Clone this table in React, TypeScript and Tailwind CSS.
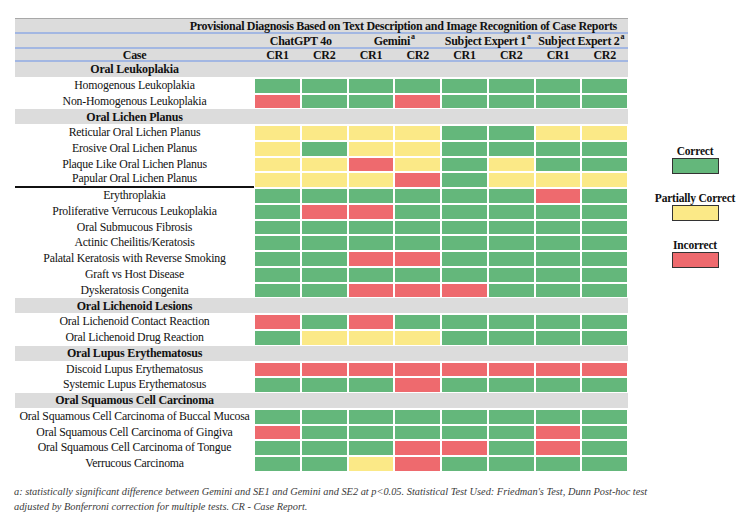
import React from "react";

type C = "G" | "Y" | "R";

const fill: Record<C, string> = {
  G: "bg-[#64b77b]",
  Y: "bg-[#fbe987]",
  R: "bg-[#ee6a6e]",
};

type Row =
  | { kind: "section"; label: string }
  | { kind: "data"; label: string; cells: string; rule?: boolean };

const rows: Row[] = [
  { kind: "section", label: "Oral Leukoplakia" },
  { kind: "data", label: "Homogenous Leukoplakia", cells: "GGGGGGGG" },
  { kind: "data", label: "Non-Homogenous Leukoplakia", cells: "RGGRGGGG" },
  { kind: "section", label: "Oral Lichen Planus" },
  { kind: "data", label: "Reticular Oral Lichen Planus", cells: "YYYYGGYY" },
  { kind: "data", label: "Erosive Oral Lichen Planus", cells: "YGYYGGGG" },
  { kind: "data", label: "Plaque Like Oral Lichen Planus", cells: "YYRYGYGG" },
  { kind: "data", label: "Papular Oral Lichen Planus", cells: "YYYRGYYY", rule: true },
  { kind: "data", label: "Erythroplakia", cells: "GGGGGGRG" },
  { kind: "data", label: "Proliferative Verrucous Leukoplakia", cells: "GRRGGGGG" },
  { kind: "data", label: "Oral Submucous Fibrosis", cells: "GGGGGGGG" },
  { kind: "data", label: "Actinic Cheilitis/Keratosis", cells: "GGGGGGGG" },
  { kind: "data", label: "Palatal Keratosis with Reverse Smoking", cells: "GGRRGGGG" },
  { kind: "data", label: "Graft vs Host Disease", cells: "GGGGGGGG" },
  { kind: "data", label: "Dyskeratosis Congenita", cells: "GGRRRGGG" },
  { kind: "section", label: "Oral Lichenoid Lesions" },
  { kind: "data", label: "Oral Lichenoid Contact Reaction", cells: "RGRGGGGG" },
  { kind: "data", label: "Oral Lichenoid Drug Reaction", cells: "GYYYGGGG" },
  { kind: "section", label: "Oral Lupus Erythematosus" },
  { kind: "data", label: "Discoid Lupus Erythematosus", cells: "RRRRRRRR" },
  { kind: "data", label: "Systemic Lupus Erythematosus", cells: "GGGRGGGG" },
  { kind: "section", label: "Oral Squamous Cell Carcinoma" },
  { kind: "data", label: "Oral Squamous Cell Carcinoma of Buccal Mucosa", cells: "GGGGGGGG" },
  { kind: "data", label: "Oral Squamous Cell Carcinoma of Gingiva", cells: "RGGGGGRG" },
  { kind: "data", label: "Oral Squamous Cell Carcinoma of Tongue", cells: "GGGRRGRG" },
  { kind: "data", label: "Verrucous Carcinoma", cells: "GGYRGGGG" },
];

const cols = "grid grid-cols-[239px_repeat(8,46.75px)]";
const models = ["ChatGPT 4o", "Gemini", "Subject Expert 1", "Subject Expert 2"];

const Sup = () => (
  <span className="text-[8px] align-top relative -top-[2px] ml-[1px] leading-none">a</span>
);

const Legend = ({ label, color }: { label: string; color: string }) => (
  <div className="flex flex-col items-center">
    <span className="font-bold text-[11.5px] tracking-[-0.2px] leading-[12px] whitespace-nowrap text-[#111]">
      {label}
    </span>
    <div className={`w-[47px] h-[16px] border border-[#333] mt-[1px] ${color}`} />
  </div>
);

export default function App() {
  return (
    <div className="w-[749px] h-[524px] bg-white relative text-[#111] font-['Liberation_Serif','Times_New_Roman',serif]">
      <div className="flex pt-[18px] pl-[15px]">
        <div className="w-[613px] shrink-0">
          <div className="bg-[#dcdcdc] border-t border-[#a8a8a8] font-bold text-[12px] tracking-[-0.3px]">
            <div className="h-[15px] flex items-center justify-end pr-[11px] border-b-2 border-[#a3b7e2] leading-none whitespace-nowrap">
              Provisional Diagnosis Based on Text Description and Image Recognition of Case Reports
            </div>
            <div className={`${cols} h-[15px] border-b-2 border-[#a3b7e2] leading-none items-center`}>
              <div />
              {models.map((m, i) => (
                <div key={m} className="col-span-2 text-center whitespace-nowrap">
                  {m}
                  {i > 0 && <Sup />}
                </div>
              ))}
            </div>
            <div className={`${cols} h-[13px] border-b-2 border-[#a3b7e2] leading-none items-center`}>
              <div className="text-center">Case</div>
              {Array.from({ length: 8 }).map((_, i) => (
                <div key={i} className="text-center">
                  {i % 2 === 0 ? "CR1" : "CR2"}
                </div>
              ))}
            </div>
          </div>
          {rows.map((r) =>
            r.kind === "section" ? (
              <div
                key={r.label}
                className={`${cols} h-[15.77px] bg-[#dcdcdc] border-b border-white font-bold text-[12px] tracking-[-0.2px] items-center leading-none`}
              >
                <div className="text-center">{r.label}</div>
              </div>
            ) : (
              <div key={r.label} className={`${cols} h-[15.77px] text-[11.8px] tracking-[-0.2px] leading-none`}>
                <div
                  className={`flex items-center justify-center whitespace-nowrap ${
                    r.rule ? "border-b-2 border-[#111]" : ""
                  }`}
                >
                  {r.label}
                </div>
                {r.cells.split("").map((c, i) => (
                  <div key={i} className={`border border-white ${fill[c as C]}`} />
                ))}
              </div>
            )
          )}
        </div>
        <div className="flex flex-col items-center ml-[13px] w-[110px] mt-[127px] gap-[18px]">
          <Legend label="Correct" color={fill.G} />
          <Legend label="Partially Correct" color={fill.Y} />
          <Legend label="Incorrect" color={fill.R} />
        </div>
      </div>
      <div className="pl-[14px] mt-[12px] italic text-[10.35px] leading-[15px] text-[#3a3a3a] whitespace-nowrap">
        a: statistically significant difference between Gemini and SE1 and Gemini and SE2 at p&lt;0.05. Statistical Test Used: Friedman's Test, Dunn Post-hoc test
        <br />
        adjusted by Bonferroni correction for multiple tests. CR - Case Report.
      </div>
    </div>
  );
}
